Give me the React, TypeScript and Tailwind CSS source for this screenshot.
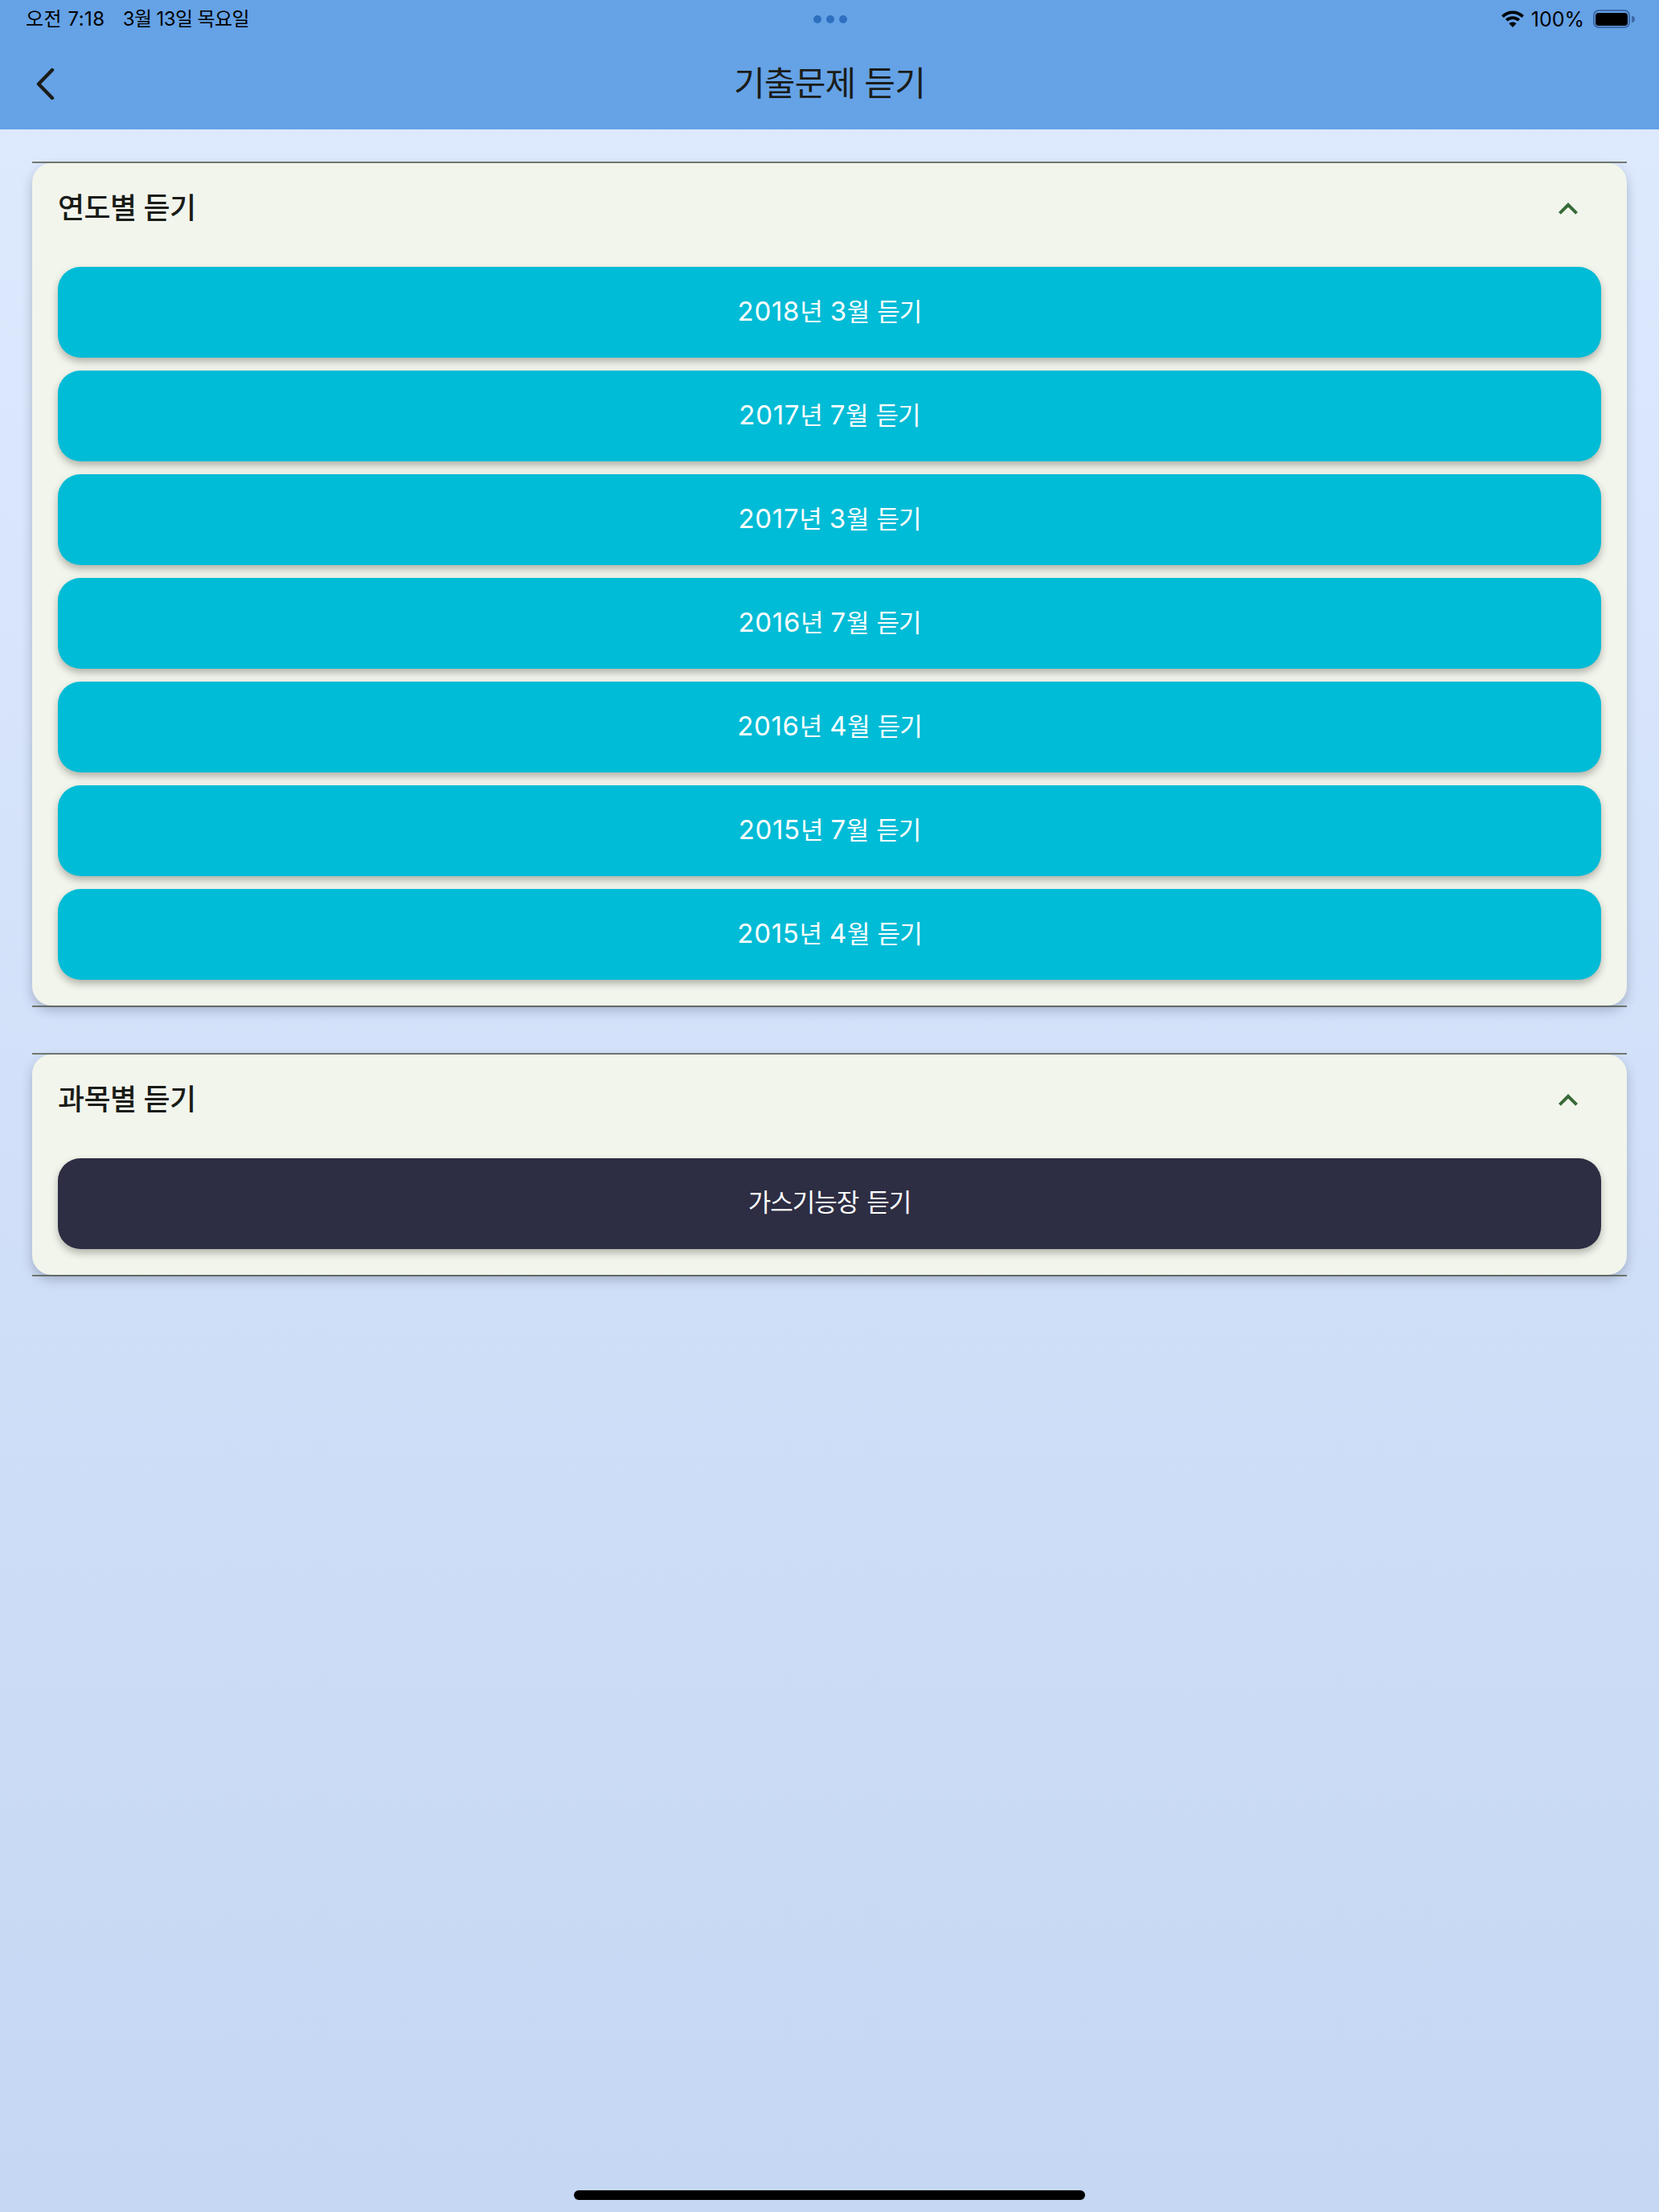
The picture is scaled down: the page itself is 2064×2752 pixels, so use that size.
const years = [
  '2018년 3월 듣기',
  '2017년 7월 듣기',
  '2017년 3월 듣기',
  '2016년 7월 듣기',
  '2016년 4월 듣기',
  '2015년 7월 듣기',
  '2015년 4월 듣기',
];

function Label({ text }: { text: string }) {
  return (
    <>
      {text.split(/([가-힣]+)/).map((part, i) =>
        /[가-힣]/.test(part) ? (
          <span key={i} className="text-[31px] tracking-[-1px]">
            {part}
          </span>
        ) : (
          <span key={i} className="tracking-[0.7px]">
            {part}
          </span>
        ),
      )}
    </>
  );
}

function Chevron() {
  return (
    <svg width="48" height="48" viewBox="0 0 24 24" className="shrink-0" fill="#386a37">
      <path d="M12 8l-6 6 1.41 1.41L12 10.83l4.59 4.58L18 14z" />
    </svg>
  );
}

function Section({ title, items, dark }: { title: string; items: string[]; dark?: boolean }) {
  return (
    <section className="border-y-2 border-[#747970]">
      <div className="rounded-[24px] bg-[#f2f5ec] shadow-[0_6px_14px_rgba(40,50,70,0.28)]">
        <div className="flex h-[112px] items-center justify-between pt-[1px] pl-[32px] pr-[49px]">
          <h2 className="pb-[2px] text-[36px] leading-[48px] font-medium tracking-[-0.6px] text-[#1a1c18]">{title}</h2>
          <Chevron />
        </div>
        <div className="flex flex-col gap-[16px] px-[32px] pt-[17px] pb-[32px]">
          {items.map((t) => (
            <div
              key={t}
              className={`flex h-[113px] items-center justify-center rounded-[28px] text-[33px] leading-[44px] text-white shadow-[0_5px_10px_rgba(40,45,35,0.32)] ${
                dark ? 'bg-[#2d2d43] pb-[4px]' : 'bg-[#00bcd6] pb-[2px]'
              }`}
            >
              <span className="whitespace-pre">
                <Label text={t} />
              </span>
            </div>
          ))}
        </div>
      </div>
    </section>
  );
}

export default function App() {
  return (
    <div className="flex h-[2752px] w-[2064px] flex-col bg-gradient-to-b from-[#dfeafe] to-[#c5d7f3] font-['Inter','Noto_Sans_CJK_KR',sans-serif] text-[#1a1c18]">
      <header className="h-[161px] shrink-0 bg-[#65a2e6]">
        <div className="grid h-[47px] grid-cols-[1fr_auto_1fr] items-center pl-[32px] pr-[30px]">
          <div className="flex gap-[22px] text-[24px] leading-[30px] text-black whitespace-pre">
            <span className="tracking-[0.5px]">오전 7:18</span>
            <span className="tracking-[-0.6px]">3월 13일 목요일</span>
          </div>
          <div className="flex gap-[6px]">
            <span className="h-[10px] w-[10px] rounded-full bg-[#2e6fbf]" />
            <span className="h-[10px] w-[10px] rounded-full bg-[#2e6fbf]" />
            <span className="h-[10px] w-[10px] rounded-full bg-[#2e6fbf]" />
          </div>
          <div className="flex items-center justify-end gap-[9px]">
            <svg width="28" height="21" viewBox="0 0 28 21" fill="none" stroke="#000" strokeWidth="3.8">
              <path d="M1.4 7.6C8.4 0.6 19.6 0.6 26.6 7.6" />
              <path d="M6.2 12.2C10.6 8 17.4 8 21.8 12.2" />
              <path d="M14 21l-4.6-4.8c2.6-2.2 6.6-2.2 9.2 0z" fill="#000" stroke="none" />
            </svg>
            <span className="text-[25px] leading-[30px] text-black">100%</span>
            <div className="ml-[2px] flex items-center gap-[2px]">
              <div className="flex h-[23px] w-[46px] items-center justify-center rounded-[7px] border-2 border-[#3c6aa6]">
                <div className="h-[16px] w-[40px] rounded-[4px] bg-black" />
              </div>
              <div className="h-[8px] w-[4px] rounded-r-full bg-[#3c6aa6]" />
            </div>
          </div>
        </div>
        <div className="grid h-[112px] grid-cols-[1fr_auto_1fr] items-center pt-[2px]">
          <svg width="26" height="40" viewBox="0 0 26 40" fill="none" stroke="#1a1c18" strokeWidth="4.4" strokeLinecap="round" strokeLinejoin="round" className="ml-[44px]">
            <path d="M21 3L4 20.5L21 38" />
          </svg>
          <h1 className="text-[42px] leading-[60px] font-normal tracking-[-0.8px]">기출문제 듣기</h1>
          <div />
        </div>
      </header>
      <main className="flex flex-col gap-[57px] px-[40px] pt-[40px]">
        <Section title="연도별 듣기" items={years} />
        <Section title="과목별 듣기" items={['가스기능장 듣기']} dark />
      </main>
      <div className="mt-auto flex justify-center pb-[15px]">
        <div className="h-[12px] w-[636px] rounded-full bg-black" />
      </div>
    </div>
  );
}
